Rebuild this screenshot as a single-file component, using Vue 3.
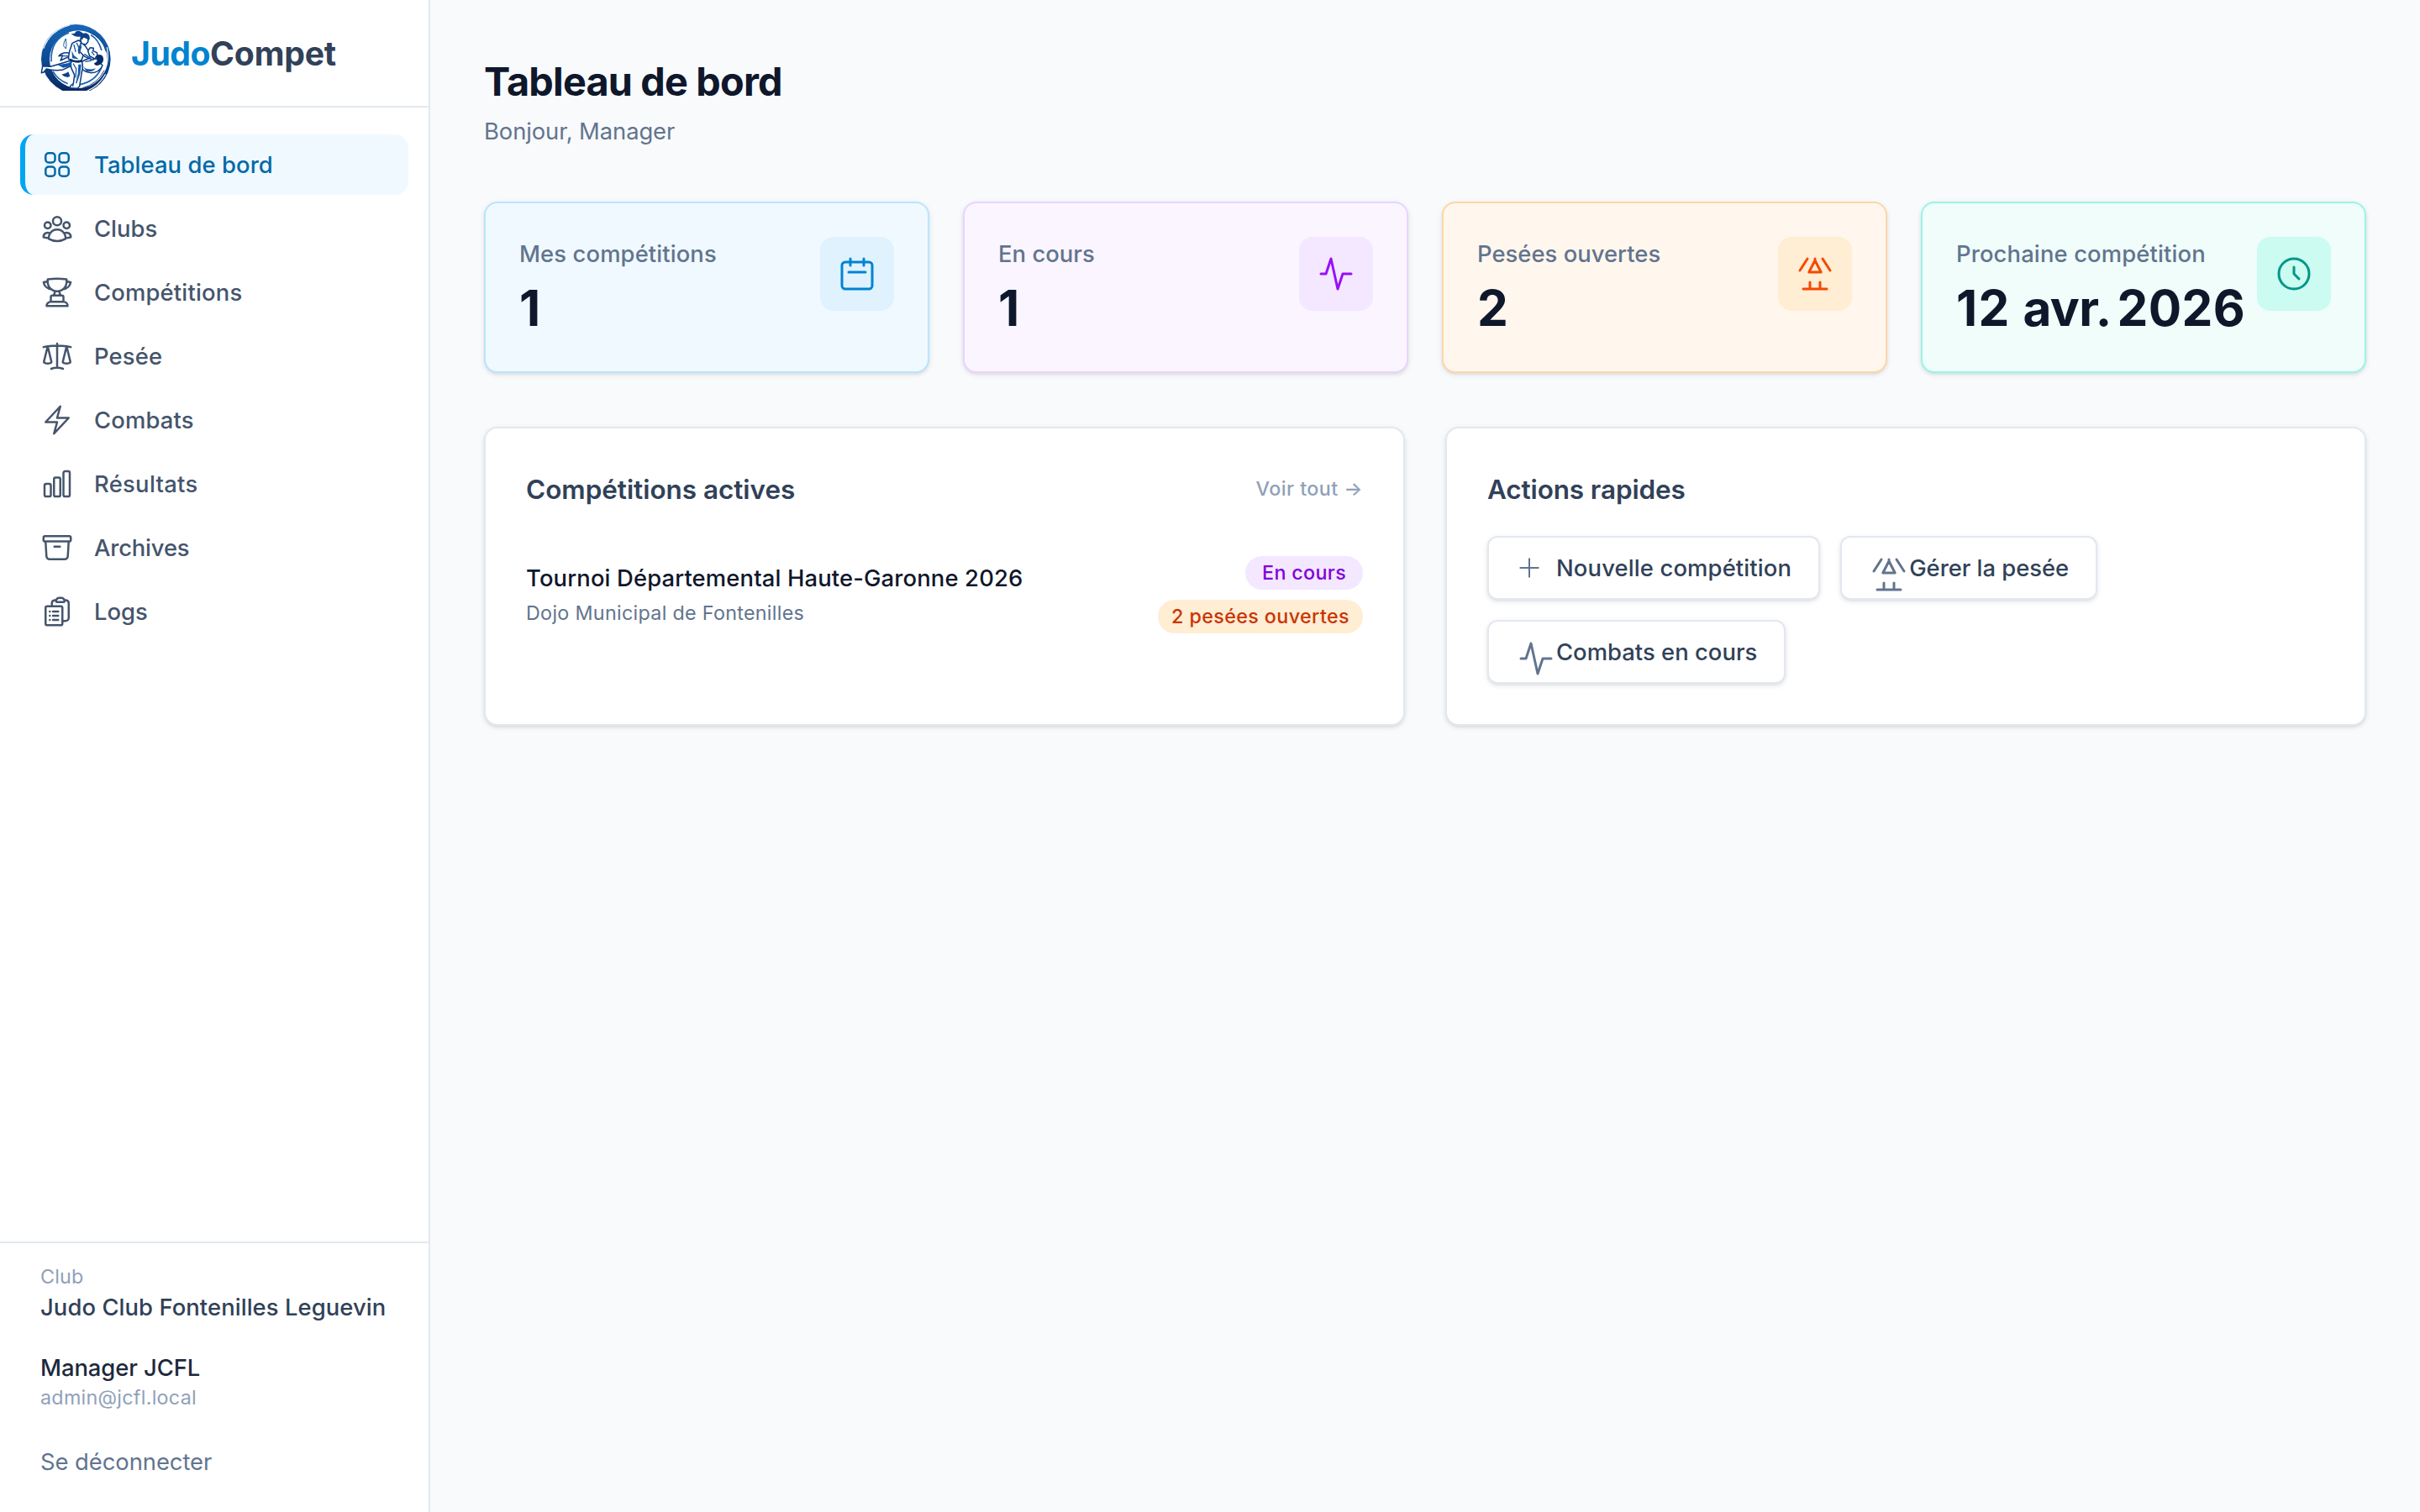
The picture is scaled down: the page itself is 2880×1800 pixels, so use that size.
<script setup>
const navItems = [
  {
    label: 'Tableau de bord', spacing: 0.0025, active: true,
    icon: 'M3.75 6A2.25 2.25 0 0 1 6 3.75h2.25A2.25 2.25 0 0 1 10.5 6v2.25a2.25 2.25 0 0 1-2.25 2.25H6a2.25 2.25 0 0 1-2.25-2.25V6ZM3.75 15.75A2.25 2.25 0 0 1 6 13.5h2.25a2.25 2.25 0 0 1 2.25 2.25V18a2.25 2.25 0 0 1-2.25 2.25H6A2.25 2.25 0 0 1 3.75 18v-2.25ZM13.5 6a2.25 2.25 0 0 1 2.25-2.25H18A2.25 2.25 0 0 1 20.25 6v2.25A2.25 2.25 0 0 1 18 10.5h-2.25a2.25 2.25 0 0 1-2.25-2.25V6ZM13.5 15.75a2.25 2.25 0 0 1 2.25-2.25H18a2.25 2.25 0 0 1 2.25 2.25V18A2.25 2.25 0 0 1 18 20.25h-2.25A2.25 2.25 0 0 1 13.5 18v-2.25Z'
  },
  {
    label: 'Clubs', spacing: 0,
    icon: 'M18 18.72a9.094 9.094 0 0 0 3.741-.479 3 3 0 0 0-4.682-2.72m.94 3.198.001.031c0 .225-.012.447-.037.666A11.944 11.944 0 0 1 12 21c-2.17 0-4.207-.576-5.963-1.584A6.062 6.062 0 0 1 6 18.719m12 0a5.971 5.971 0 0 0-.941-3.197m0 0A5.995 5.995 0 0 0 12 12.75a5.995 5.995 0 0 0-5.058 2.772m0 0a3 3 0 0 0-4.681 2.72 8.986 8.986 0 0 0 3.74.477m.94-3.197a5.971 5.971 0 0 0-.94 3.197M15 6.75a3 3 0 1 1-6 0 3 3 0 0 1 6 0Zm6 3a2.25 2.25 0 1 1-4.5 0 2.25 2.25 0 0 1 4.5 0Zm-13.5 0a2.25 2.25 0 1 1-4.5 0 2.25 2.25 0 0 1 4.5 0Z'
  },
  {
    label: 'Compétitions', spacing: 0.0065,
    icon: 'M16.5 18.75h-9m9 0a3 3 0 0 1 3 3h-15a3 3 0 0 1 3-3m9 0v-3.375c0-.621-.503-1.125-1.125-1.125h-.871M7.5 18.75v-3.375c0-.621.504-1.125 1.125-1.125h.872m5.007 0H9.497m5.007 0a7.454 7.454 0 0 1-.982-3.172M9.497 14.25a7.454 7.454 0 0 0 .981-3.172M5.25 4.236c-.982.143-1.954.317-2.916.52A6.003 6.003 0 0 0 7.73 9.728M5.25 4.236V4.5c0 2.108.966 3.99 2.48 5.228M5.25 4.236V2.721C7.456 2.41 9.71 2.25 12 2.25c2.291 0 4.545.16 6.75.47v1.516M7.73 9.728a6.726 6.726 0 0 0 2.748 1.35m8.272-6.842V4.5c0 2.108-.966 3.99-2.48 5.228m2.48-5.492a46.32 46.32 0 0 1 2.916.52 6.003 6.003 0 0 1-5.395 4.972m0 0a6.726 6.726 0 0 1-2.749 1.35m0 0a6.772 6.772 0 0 1-3.044 0'
  },
  {
    label: 'Pesée', spacing: 0.0065,
    icon: 'M12 3v17.25m0 0c-1.472 0-2.882.265-4.185.75M12 20.25c1.472 0 2.882.265 4.185.75M18.75 4.97A48.416 48.416 0 0 0 12 4.5c-2.291 0-4.545.16-6.75.47m13.5 0c1.01.143 2.01.317 3 .52m-3-.52 2.62 10.726c.122.499-.106 1.028-.589 1.202a5.988 5.988 0 0 1-2.031.352 5.988 5.988 0 0 1-2.031-.352c-.483-.174-.711-.703-.59-1.202L18.75 4.971Zm-16.5.52c.99-.203 1.99-.377 3-.52m0 0 2.62 10.726c.122.499-.106 1.028-.589 1.202a5.989 5.989 0 0 1-2.031.352 5.989 5.989 0 0 1-2.031-.352c-.483-.174-.711-.703-.59-1.202L5.25 4.971Z'
  },
  { label: 'Combats', spacing: 0.0062, icon: 'm3.75 13.5 10.5-11.25L12 10.5h8.25L9.75 21.75 12 13.5H3.75Z' },
  {
    label: 'Résultats', spacing: 0.011,
    icon: 'M3 13.125C3 12.504 3.504 12 4.125 12h2.25c.621 0 1.125.504 1.125 1.125v6.75C7.5 20.496 6.996 21 6.375 21h-2.25A1.125 1.125 0 0 1 3 19.875v-6.75ZM9.75 8.625c0-.621.504-1.125 1.125-1.125h2.25c.621 0 1.125.504 1.125 1.125v11.25c0 .621-.504 1.125-1.125 1.125h-2.25a1.125 1.125 0 0 1-1.125-1.125V8.625ZM16.5 4.125c0-.621.504-1.125 1.125-1.125h2.25C20.496 3 21 3.504 21 4.125v15.75c0 .621-.504 1.125-1.125 1.125h-2.25a1.125 1.125 0 0 1-1.125-1.125V4.125Z'
  },
  {
    label: 'Archives', spacing: -0.006,
    icon: 'm20.25 7.5-.625 10.632a2.25 2.25 0 0 1-2.247 2.118H6.622a2.25 2.25 0 0 1-2.247-2.118L3.75 7.5M10 11.25h4M3.375 7.5h17.25c.621 0 1.125-.504 1.125-1.125v-1.5c0-.621-.504-1.125-1.125-1.125H3.375c-.621 0-1.125.504-1.125 1.125v1.5c0 .621.504 1.125 1.125 1.125Z'
  },
  {
    label: 'Logs', spacing: 0,
    icon: 'M9 12h3.75M9 15h3.75M9 18h3.75m3 .75H18a2.25 2.25 0 0 0 2.25-2.25V6.108c0-1.135-.845-2.098-1.976-2.192a48.424 48.424 0 0 0-1.123-.08m-5.801 0c-.065.21-.1.433-.1.664 0 .414.336.75.75.75h4.5a.75.75 0 0 0 .75-.75 2.25 2.25 0 0 0-.1-.664m-5.8 0A2.251 2.251 0 0 1 13.5 2.25H15c1.012 0 1.867.668 2.15 1.586m-5.8 0c-.376.023-.75.05-1.124.08C9.095 4.01 8.25 4.973 8.25 6.108V8.25m0 0H4.875c-.621 0-1.125.504-1.125 1.125v11.25c0 .621.504 1.125 1.125 1.125h9.75c.621 0 1.125-.504 1.125-1.125V9.375c0-.621-.504-1.125-1.125-1.125H8.25ZM6.75 12h.008v.008H6.75V12Zm0 3h.008v.008H6.75V15Zm0 3h.008v.008H6.75V18Z'
  }
]

const calendar = 'M8 7V3m8 4V3m-9 8h10M5 21h14a2 2 0 0 0 2-2V7a2 2 0 0 0-2-2H5a2 2 0 0 0-2 2v12a2 2 0 0 0 2 2Z'
const pulse = 'M3 12h3l3-9 4 18 3-9h5'
const weigh = 'M3 10l4.5-7M21 10l-4.5-7M12 3v1m0 0-3.6 7h7.2L12 4ZM9 17v4m6-4v4M5 21h14'
const clock = 'M12 8v4l3 3m6-3a9 9 0 1 1-18 0 9 9 0 0 1 18 0Z'

const stats = [
  { label: 'Mes compétitions', spacing: 0.004, value: [['1', 0]], tone: 'sky', icon: calendar },
  { label: 'En cours', spacing: 0.001, value: [['1', 0]], tone: 'purple', icon: pulse },
  { label: 'Pesées ouvertes', spacing: 0.001, value: [['2', 0]], tone: 'orange', icon: weigh },
  {
    label: 'Prochaine compétition', spacing: 0.005, tone: 'teal', icon: clock,
    value: [['12 ', 0.02], ['avr.', -0.0111], [' ', -0.12], ['2026', 0.006]]
  }
]

const actions = [
  { label: 'Nouvelle compétition', spacing: 0.005, icon: 'M12 4v16m8-8H4', small: true },
  { label: 'Gérer la pesée', spacing: -0.001, icon: weigh },
  { label: 'Combats en cours', spacing: 0.001, icon: pulse }
]
</script>

<template>
  <div class="app">
    <aside class="sidebar">
      <div class="brand">
        <svg class="logo" viewBox="54 54 252 240" aria-hidden="true">
          <defs>
            <linearGradient id="ring" x1="0" y1="0" x2="0" y2="1">
              <stop offset="0" stop-color="#1767b8" />
              <stop offset="0.5" stop-color="#0d4a94" />
              <stop offset="1" stop-color="#07265c" />
            </linearGradient>
          </defs>
          <path fill="url(#ring)" fill-rule="evenodd" d="M181 57a124 124 0 1 1 0 248 124 124 0 0 1 0-248ZM190 79a103 103 0 1 0 0 206 103 103 0 0 0 0-206Z" />
          <g fill="none" stroke-linecap="round">
            <path stroke="#fff" stroke-width="3.5" d="M66 142Q88 80 158 60M292 140Q302 190 280 230M286 236Q262 278 222 294M62 216Q80 268 130 294" />
            <path stroke="#1b62ad" stroke-width="5" d="M93 188Q90 112 154 88M236 96Q262 112 272 148M272 212Q252 260 196 272M100 226Q118 256 150 268" />
            <path stroke="#0b3f86" stroke-width="3" d="M282 222Q258 270 206 284M228 84Q276 104 288 152" />
          </g>
          <path fill="#fff" stroke="#1b62ad" stroke-width="3" d="M145 108l-6 12-2 14 8 10 2-14Z" />
          <g stroke="#0a3a80" stroke-width="4.5" stroke-linejoin="round" fill="#fff">
            <path d="M200 192q20-14 40-16l18 6 18 22q-12 26-40 26-24-2-34-16Z" />
            <path d="M160 160q-26-6-40 10l14-2-8 18 30-14Z" />
            <path d="M170 184l-46 14-34 10-28-2-4 24 8-2 10-12q24 8 56 4l40-18Z" />
            <path d="M162 184l40 4q6 18 0 40l-8 50-8 8-26-2 2-8 10-8 4-30-12-26Z" />
            <path d="M190 114l-22 10-10 30-4 26q26 16 46 10l6-20 4-26-8-24Z" />
            <path d="M200 120l14 14 18 26 18 14-8 10-30-12-22-22Z" />
            <path d="M224 152l8-12 12 2-2 10 14 6 2 12-10 10-18-10Z" />
            <path d="M200 98l-3 14 5 14 14 3 8-9 1-12Z" />
          </g>
          <g fill="#0c428c">
            <path d="M200 96q10-12 22-6 10 6 8 20l-4 4-8-8-10-2-6 10q-6-10-2-18Z" />
            <path d="M202 98q-18 10-38-8 8 1 12-1 6-12 18-8l14 8Z" />
            <path fill="#082d6b" d="M250 172q12-12 24-4 8 8 4 22-8 14-24 14-8-2-8-8 10-4 12-12Z" />
            <path d="M130 236q16-2 24-10l6 16-8 4q-12 0-22-10Z" />
            <path fill="#1458a5" d="M116 202l36-6 20-10-14 22-22 4ZM190 200l10 0-4 34-12 34-4 0 8-34ZM206 206q16 18 46 8-12 16-34 10ZM196 128l6 8-8 28-6-6ZM166 150l8 18 18 14-24-4Z" />
          </g>
          <path fill="none" stroke="#1458a5" stroke-width="4" stroke-linecap="round" d="M174 130l6 24M184 124l8 18M212 164l22 14M172 198l10 18-2 30M172 268l-2 10M136 170l16 0M238 156l8 10M216 190l20-4" />
          <path fill="none" stroke="#072a63" stroke-width="6" d="M160 182q20 12 42 4" />
        </svg>
        <div class="brand-name"><span class="judo">Judo</span><span class="compet">Compet</span></div>
      </div>

      <nav class="nav">
        <a v-for="item in navItems" :key="item.label" class="nav-item" :class="{ active: item.active }">
          <svg class="nav-icon" viewBox="0 0 24 24"><path :d="item.icon" /></svg>
          <span :style="{ letterSpacing: item.spacing + 'em' }">{{ item.label }}</span>
        </a>
      </nav>

      <div class="account">
        <div class="club-label">Club</div>
        <div class="club-name">Judo Club Fontenilles Leguevin</div>
        <div class="user-name">Manager JCFL</div>
        <div class="user-mail">admin@jcfl.local</div>
        <a class="logout">Se déconnecter</a>
      </div>
    </aside>

    <main class="main">
      <h1 class="title">Tableau de bord</h1>
      <p class="subtitle">Bonjour, Manager</p>

      <section class="stats">
        <article v-for="stat in stats" :key="stat.label" class="stat" :class="stat.tone">
          <div>
            <div class="stat-label" :style="{ letterSpacing: stat.spacing + 'em' }">{{ stat.label }}</div>
            <div class="stat-value"><span v-for="([part, gap], i) in stat.value" :key="i" :style="{ letterSpacing: gap + 'em' }">{{ part }}</span></div>
          </div>
          <div class="stat-icon">
            <svg class="icon" viewBox="0 0 24 24"><path :d="stat.icon" /></svg>
          </div>
        </article>
      </section>

      <section class="panels">
        <article class="panel">
          <header class="panel-head">
            <h2 class="panel-title">Compétitions actives</h2>
            <a class="see-all">Voir tout →</a>
          </header>
          <div class="competition">
            <div>
              <div class="competition-name">Tournoi Départemental Haute-Garonne 2026</div>
              <div class="competition-place">Dojo Municipal de Fontenilles</div>
            </div>
            <div class="badges">
              <span class="badge running">En cours</span>
              <span class="badge weighing">2 pesées ouvertes</span>
            </div>
          </div>
        </article>

        <article class="panel">
          <header class="panel-head">
            <h2 class="panel-title tight">Actions rapides</h2>
          </header>
          <div class="actions">
            <button v-for="action in actions" :key="action.label" class="action" type="button">
              <span class="action-icon">
                <svg class="icon" :class="{ small: action.small }" viewBox="0 0 24 24"><path :d="action.icon" /></svg>
              </span>
              <span :style="{ letterSpacing: action.spacing + 'em' }">{{ action.label }}</span>
            </button>
          </div>
        </article>
      </section>
    </main>
  </div>
</template>

<style>
body {
  background: #f8fafc;
}
</style>

<style scoped>
.app {
  box-sizing: border-box;
  display: flex;
  width: 2880px;
  height: 1800px;
  overflow: hidden;
  background: #f8fafc;
  color: #0f172b;
  font-family: Inter, "Liberation Sans", sans-serif;
  font-size: 27.4px;
  line-height: 40px;
}
.app *,
.app *::before {
  box-sizing: border-box;
}
svg {
  display: block;
  flex: none;
}

/* Sidebar */
.sidebar {
  display: flex;
  flex-direction: column;
  flex: none;
  width: 512px;
  background: #fff;
  border-right: 2px solid #e2e8f0;
}
.brand {
  display: flex;
  align-items: center;
  gap: 24px;
  height: 128px;
  padding: 10px 48px 0;
  border-bottom: 2px solid #e2e8f0;
}
.logo {
  width: 84px;
  height: 80px;
}
.brand-name {
  display: flex;
  margin-top: -8px;
  font-size: 39.2px;
  font-weight: 700;
  line-height: 56px;
}
.judo {
  color: #0084d1;
  letter-spacing: -0.013em;
}
.compet {
  color: #314158;
  letter-spacing: -0.005em;
}
.nav {
  display: flex;
  flex: 1;
  flex-direction: column;
  gap: 4px;
  padding: 32px 24px;
}
.nav-item {
  display: flex;
  align-items: center;
  gap: 24px;
  height: 72px;
  padding-left: 18px;
  border-left: 6px solid transparent;
  border-radius: 16px;
  color: #45556c;
  font-weight: 500;
}
.nav-item.active {
  border-left-color: #00a6f4;
  background: #f0f9ff;
  color: #0069a8;
}
.nav-icon {
  width: 40px;
  height: 40px;
}
.nav-icon,
.icon {
  fill: none;
  stroke: currentColor;
  stroke-width: 1.5;
  stroke-linecap: round;
  stroke-linejoin: round;
}
.account {
  padding: 24px 48px 40px;
  border-top: 2px solid #e2e8f0;
  white-space: nowrap;
}
.club-label,
.user-mail {
  color: #90a1b9;
  font-size: 23.3px;
  line-height: 32px;
  letter-spacing: 0.008em;
}
.user-mail {
  margin-bottom: 40px;
  letter-spacing: 0.012em;
}
.club-name {
  margin-bottom: 32px;
  color: #314158;
  font-weight: 500;
  letter-spacing: 0.0027em;
}
.user-name {
  color: #1d293d;
  font-weight: 500;
  letter-spacing: -0.0025em;
}
.logout {
  display: block;
  color: #62748e;
  letter-spacing: -0.002em;
}

/* Main column */
.main {
  flex: 1;
  padding: 64px;
}
.title {
  margin: 0;
  font-size: 46.8px;
  font-weight: 700;
  line-height: 66px;
  letter-spacing: -0.0175em;
}
.subtitle {
  margin: 6px 0 64px;
  color: #62748e;
  letter-spacing: -0.0035em;
}
.stats {
  display: grid;
  grid-template-columns: repeat(4, 1fr);
  gap: 40px;
  margin-bottom: 64px;
}
.stat {
  display: flex;
  align-items: flex-start;
  justify-content: space-between;
  height: 204px;
  padding: 40px;
  border: 2px solid;
  border-radius: 16px;
  box-shadow: 0 2px 6px rgba(0, 0, 0, 0.1), 0 2px 4px -2px rgba(0, 0, 0, 0.1);
  white-space: nowrap;
}
.stat-label {
  color: #62748e;
  font-weight: 500;
}
.stat-value {
  margin-top: 8px;
  font-size: 58.5px;
  font-weight: 700;
  line-height: 73px;
  white-space: pre;
}
.stat-icon {
  display: flex;
  padding: 20px;
  border-radius: 16px;
}
.icon {
  width: 48px;
  height: 48px;
}
.sky {
  border-color: #b8e6fe;
  background: #f0f9ff;
}
.sky .stat-icon {
  background: #dff2fe;
  color: #0084d1;
}
.purple {
  border-color: #e9d4ff;
  background: #faf5ff;
}
.purple .stat-icon {
  background: #f3e8ff;
  color: #9810fa;
}
.orange {
  border-color: #ffd6a7;
  background: #fff7ed;
}
.orange .stat-icon {
  background: #ffedd4;
  color: #f54900;
}
.teal {
  border-color: #96f7e4;
  background: #f0fdfa;
}
.teal .stat-icon {
  background: #cbfbf1;
  color: #009689;
}

/* Panels */
.panels {
  display: grid;
  grid-template-columns: repeat(2, 1fr);
  gap: 48px;
}
.panel {
  height: 356px;
  padding: 48px;
  border: 2px solid #e2e8f0;
  border-radius: 16px;
  background: #fff;
  box-shadow: 0 2px 6px rgba(0, 0, 0, 0.1), 0 2px 4px -2px rgba(0, 0, 0, 0.1);
}
.panel-head {
  display: flex;
  align-items: center;
  justify-content: space-between;
  height: 49px;
  margin-bottom: 31px;
}
.panel-title {
  margin: 0;
  color: #314158;
  font-size: 31.5px;
  font-weight: 600;
  line-height: 49px;
  letter-spacing: -0.0013em;
}
.panel-title.tight {
  letter-spacing: -0.004em;
}
.see-all {
  margin-top: -2px;
  color: #90a1b9;
  font-size: 23.3px;
  font-weight: 500;
  letter-spacing: 0.019em;
}
.competition {
  display: flex;
  align-items: center;
  justify-content: space-between;
  padding: 24px 0;
}
.competition-name {
  font-weight: 500;
  letter-spacing: 0.0051em;
}
.competition-place {
  margin-top: 4px;
  color: #62748e;
  font-size: 23.3px;
  line-height: 36px;
  letter-spacing: 0.013em;
}
.badges {
  display: flex;
  flex-direction: column;
  align-items: flex-end;
  gap: 12px;
}
.badge {
  height: 40px;
  border-radius: 20px;
  font-size: 23.3px;
  font-weight: 500;
}
.running {
  padding: 0 20px;
  background: #f3e8ff;
  color: #8200db;
  letter-spacing: 0.0135em;
}
.weighing {
  padding: 0 16px;
  background: #ffedd4;
  color: #ca3500;
  letter-spacing: 0.0165em;
}
.actions {
  display: flex;
  flex-wrap: wrap;
  gap: 24px;
  width: 760px;
}
.action {
  display: flex;
  align-items: center;
  gap: 16px;
  height: 76px;
  padding: 0 32px;
  border: 2px solid #e2e8f0;
  border-radius: 12px;
  background: #fff;
  box-shadow: 0 2px 6px rgba(0, 0, 0, 0.1), 0 2px 4px -2px rgba(0, 0, 0, 0.1);
  color: #314158;
  font: 500 27.4px/40px Inter, "Liberation Sans", sans-serif;
  white-space: nowrap;
}
.action-icon {
  width: 32px;
  height: 32px;
  color: #62748e;
}
.icon.small {
  width: 32px;
  height: 32px;
}
</style>
